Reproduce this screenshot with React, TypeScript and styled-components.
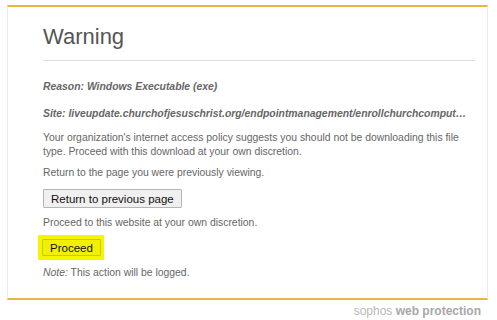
import styled, { createGlobalStyle } from "styled-components";

const GlobalStyle = createGlobalStyle`
  html, body {
    margin: 0;
    padding: 0;
    background: #ffffff;
    font-family: "Liberation Sans", Arial, sans-serif;
  }
`;

const Page = styled.div`
  width: 497px;
  height: 320px;
  padding: 5px 9px 0 7px;
  box-sizing: border-box;
  display: flex;
  flex-direction: column;
`;

const Card = styled.div`
  border-top: 2px solid #e8b548;
  border-bottom: 2px solid #e8b548;
  border-left: 1px solid #ececec;
  border-right: 1px solid #ececec;
  padding: 17px 12px 18px 35px;
  display: flex;
  flex-direction: column;
`;

const Title = styled.h1`
  margin: 0;
  font-size: 22px;
  font-weight: normal;
  color: #555555;
  line-height: 26px;
  padding-bottom: 10px;
  border-bottom: 1px solid #dddddd;
`;

const Para = styled.p<{ $top?: number; $strong?: boolean; $trim?: number }>`
  margin: ${(p) => p.$top ?? 12}px 0 0 0;
  padding-right: ${(p) => p.$trim ?? 0}px;
  font-size: 10.4px;
  line-height: 14px;
  color: #666666;
  font-weight: ${(p) => (p.$strong ? "bold" : "normal")};
  font-style: ${(p) => (p.$strong ? "italic" : "normal")};
  white-space: ${(p) => (p.$strong ? "nowrap" : "normal")};
  overflow: hidden;
  text-overflow: ellipsis;
`;

const ButtonRow = styled.div`
  margin-top: 9px;
  display: flex;
`;

const Highlight = styled.div`
  margin-top: 5px;
  margin-left: -5px;
  padding: 4px 3px 4px 4px;
  background: #f5f500;
  display: flex;
  align-self: flex-start;
`;

const Button = styled.button<{ $yellow?: boolean }>`
  font-family: "Liberation Sans", Arial, sans-serif;
  font-size: 11.5px;
  color: #111111;
  height: ${(p) => (p.$yellow ? 17 : 19)}px;
  padding: 0 7px;
  border: 1px solid ${(p) => (p.$yellow ? "#c9c900" : "#b5b5b5")};
  border-radius: 1px;
  background: ${(p) => (p.$yellow ? "#f0f000" : "#f0f0f0")};
  cursor: pointer;
`;

const Footer = styled.div`
  margin-top: 4px;
  padding-right: 7px;
  text-align: right;
  font-size: 12px;
  line-height: 14px;
  color: #b8b8b8;

  b {
    color: #a8a8a8;
  }
`;

export default function App() {
  return (
    <>
      <GlobalStyle />
      <Page>
        <Card>
          <Title>Warning</Title>
          <Para $top={19} $strong>
            Reason: Windows Executable (exe)
          </Para>
          <Para $top={13} $strong $trim={8}>
            Site: liveupdate.churchofjesuschrist.org/endpointmanagement/enrollchurchcomputer/download
          </Para>
          <Para $top={10}>
            Your organization's internet access policy suggests you should not be downloading this file
            type. Proceed with this download at your own discretion.
          </Para>
          <Para $top={7}>Return to the page you were previously viewing.</Para>
          <ButtonRow>
            <Button>Return to previous page</Button>
          </ButtonRow>
          <Para $top={8}>Proceed to this website at your own discretion.</Para>
          <Highlight>
            <Button $yellow>Proceed</Button>
          </Highlight>
          <Para $top={6}>
            <i>Note:</i> This action will be logged.
          </Para>
        </Card>
        <Footer>
          sophos <b>web protection</b>
        </Footer>
      </Page>
    </>
  );
}
